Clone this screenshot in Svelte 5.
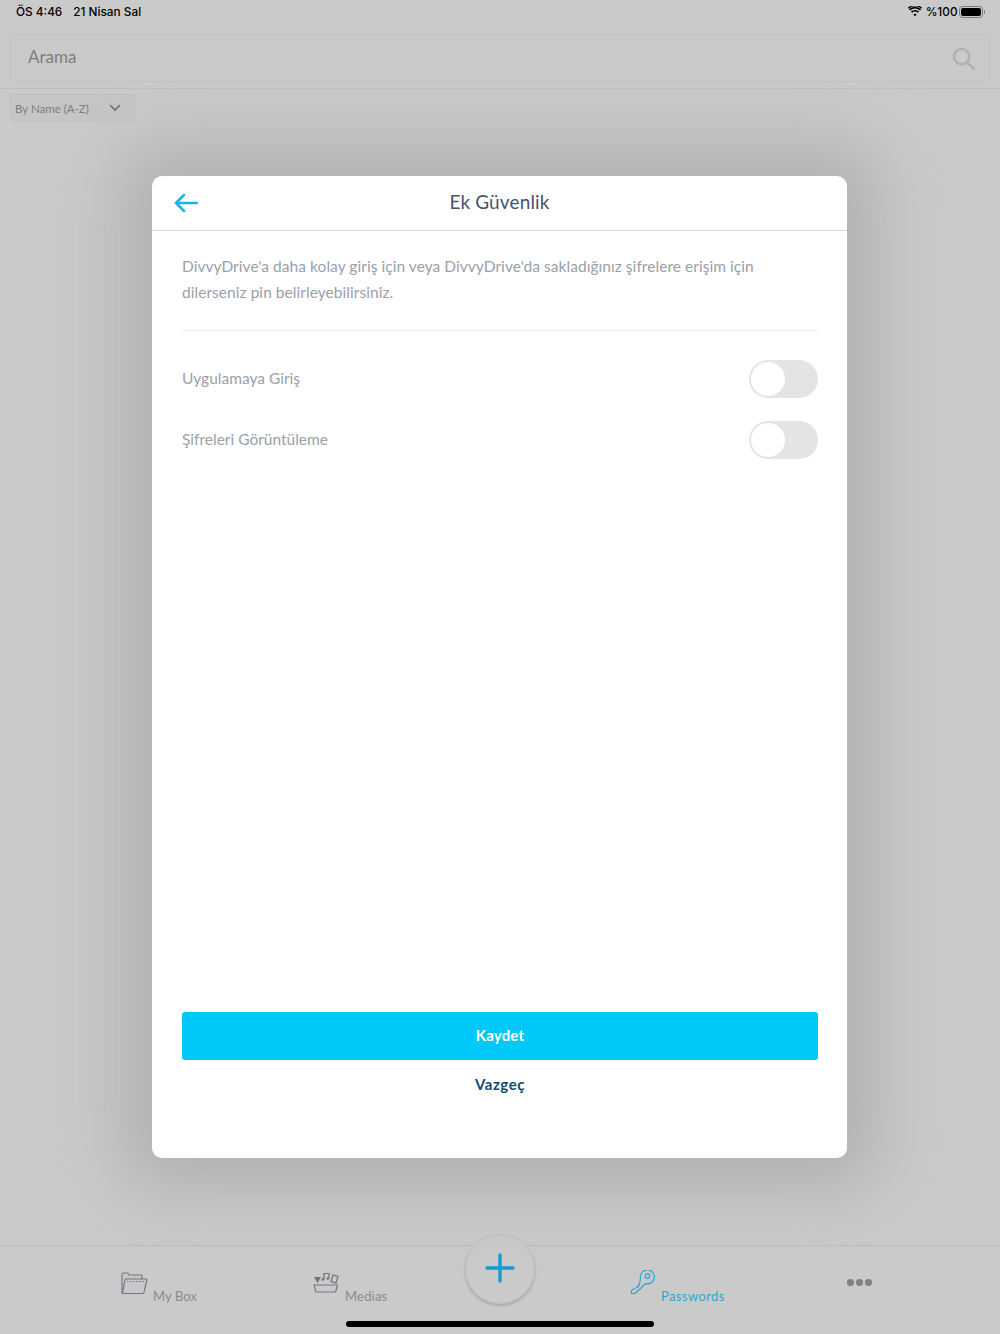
<script>
  const toggles = ['Uygulamaya Giriş', 'Şifreleri Görüntüleme'];
</script>

<div class="page">
  <div class="status">
    <div class="status-left"><span>ÖS 4:46</span><span>21 Nisan Sal</span></div>
    <div class="status-right">
      <svg class="wifi" width="14" height="11" viewBox="0 0 14 11"><path d="M7 7.800a1.700 1.700 0 0 1 1.500.8L7 10.400 5.500 8.600A1.700 1.700 0 0 1 7 7.800Z" fill="#000"/><path d="M3.500 6.200a5 5 0 0 1 7 0M1.500 3.900a7.800 7.800 0 0 1 11 0" fill="none" stroke="#000" stroke-width="1.700"/><path d="M.3 2.200a10 10 0 0 1 13.400 0" fill="none" stroke="#000" stroke-width="1.300"/></svg>
      <span>%100</span>
      <div class="battery"><div class="battery-fill"></div></div>
      <div class="battery-tip"></div>
    </div>
  </div>

  <div class="search-wrap">
    <div class="search">
      <span>Arama</span>
      <svg width="23" height="23" viewBox="0 0 24 24" fill="none" stroke="#b0b0b3" stroke-width="2.500"><circle cx="10" cy="10" r="8"/><path d="M16 16l7 7" stroke-linecap="round"/></svg>
    </div>
  </div>

  <div class="sort-row">
    <div class="sort">
      <span>By Name (A-Z)</span>
      <svg width="12" height="8" viewBox="0 0 12 8" fill="none" stroke="#6c7075" stroke-width="1.600"><path d="M1 1l5 5 5-5"/></svg>
    </div>
  </div>

  <div class="stage">
    <div class="modal">
      <header class="modal-head">
        <svg class="back" width="24" height="20" viewBox="0 0 24 20" fill="none" stroke="#19b5ea" stroke-width="2.500" stroke-linecap="round" stroke-linejoin="round"><path d="M23 10H2M10 2l-8 8 8 8"/></svg>
        <h1>Ek Güvenlik</h1>
      </header>
      <div class="modal-body">
        <p class="intro">DivvyDrive'a daha kolay giriş için veya DivvyDrive'da sakladığınız şifrelere erişim için dilerseniz pin belirleyebilirsiniz.</p>
        <div class="rule"></div>
        <div class="rows">
          {#each toggles as label}
            <div class="row">
              <span>{label}</span>
              <div class="switch"><div class="knob"></div></div>
            </div>
          {/each}
        </div>
        <div class="actions">
          <button class="save">Kaydet</button>
          <button class="cancel">Vazgeç</button>
        </div>
      </div>
    </div>
  </div>

  <nav class="tabbar">
    <div class="tab mybox">
      <svg width="28" height="23" viewBox="0 0 28 23" fill="#c7c7cc" stroke="#74787f" stroke-width="1.200" stroke-linejoin="round"><path d="M2 21V2.500Q2 1 3.500 1H7q1 0 1.500 1L9 3h12q1 0 1 1v3"/><path d="M2.500 21.500 5 8q.2-1 1.200-1H26q1 0 .8 1L24 20.500q-.2 1-1.200 1Z"/><path d="M7 9.500h17" stroke-dasharray="1.500 1.500" fill="none"/></svg>
      <span>My Box</span>
    </div>
    <div class="tab medias">
      <svg width="26" height="22" viewBox="0 0 26 22"><path d="M1 5h7L4.500 11Z" fill="#6d7178"/><path d="M11 7.500V1.500h5v5" fill="none" stroke="#6d7178" stroke-width="1.200"/><circle cx="9.800" cy="7.500" r="1.300" fill="#6d7178"/><circle cx="14.800" cy="6.500" r="1.300" fill="#6d7178"/><path d="M20 3l5 1.500-2 6.500-5-1.500Z" fill="none" stroke="#6d7178" stroke-width="1.200"/><path d="M1 13h23.500l-2 7H3Z" fill="#c9c9cc" stroke="#74787f" stroke-width="1.200"/></svg>
      <span>Medias</span>
    </div>
    <div class="plus">
      <svg width="30" height="30" viewBox="0 0 30 30" stroke="#149fcf" stroke-width="3.400" stroke-linecap="round"><path d="M15 2v26M2 15h26"/></svg>
    </div>
    <div class="tab passwords">
      <svg width="25" height="25" viewBox="0 0 25 25" fill="none" stroke="#2ca6d1" stroke-width="1.200" stroke-linejoin="round"><path d="M10.500 9.500a7 7 0 1 1 5 5.200L5 24.500H1.500v-3l2-1.500h1.500l1.200-1.500h1.500v-1.800h1.500Z" transform="translate(0 -1)"/><circle cx="17.500" cy="6" r="2.300"/></svg>
      <span>Passwords</span>
    </div>
    <div class="tab more"><i></i><i></i><i></i></div>
    <div class="home"></div>
  </nav>
</div>

<style>
  :global(body) { margin: 0; }
  .page {
    width: 1000px; height: 1334px; display: flex; flex-direction: column;
    background: #cacaca; font-family: "Lato", "Open Sans", sans-serif; overflow: hidden;
    position: relative;
  }
  .status {
    height: 24px; flex: none; display: flex; justify-content: space-between; align-items: center;
    padding: 0 15px 1px 16px; box-sizing: border-box; font-family: "Inter", sans-serif;
    font-size: 11.800px; font-weight: 500; color: #000;
  }
  .status-left { display: flex; gap: 11px; }
  .status-right { display: flex; align-items: center; }
  .wifi { margin-right: 4px; }
  .battery { width: 24px; height: 12px; border: 1px solid #7b7b7b; border-radius: 3.500px; padding: 1px; box-sizing: border-box; margin-left: 1px; }
  .battery-fill { width: 100%; height: 100%; background: #000; border-radius: 2px; }
  .battery-tip { width: 1.500px; height: 4px; background: #7b7b7b; margin-left: 1px; border-radius: 0 1px 1px 0; }
  .search-wrap { flex: none; padding: 10px 10px 6px; border-bottom: 1px solid #bfbfbf; }
  .search {
    height: 48px; box-sizing: border-box; border: 1px solid #c2c2c2; border-radius: 4px;
    display: flex; align-items: center; justify-content: space-between; padding: 0 14px 0 17px;
    font-size: 17px; color: #7d7d7d;
  }
  .search span { margin-bottom: 4px; }
  .sort-row { flex: none; padding: 5px 10px 0; }
  .sort {
    width: 125px; height: 28px; box-sizing: border-box; border: 1px solid #c2c2c2; border-radius: 4px;
    background: #c6c6c6; display: flex; align-items: center; justify-content: space-between;
    padding: 0 13px 0 4px; font-size: 11.500px; color: #808080;
  }
  .stage {
    flex: 1; position: relative; display: flex; justify-content: center; align-items: flex-start;
    padding-top: 54px; min-height: 0;
  }
  .modal {
    width: 695px; height: 982px; background: #fff; border-radius: 10px;
    box-shadow: 0 0 70px 30px rgba(160, 165, 160, .65);
    display: flex; flex-direction: column; position: relative; z-index: 1;
    margin-left: -1px;
  }
  .modal-head {
    height: 55px; flex: none; box-sizing: border-box; border-bottom: 1px solid #d8d8d8;
    display: flex; align-items: center; justify-content: center; position: relative;
  }
  .back { position: absolute; left: 22px; top: 17px; }
  h1 { margin: 0 0 4px 0; font-size: 19px; letter-spacing: .15px; font-weight: 400; color: #47536b; }
  .modal-body { flex: 1; display: flex; flex-direction: column; padding: 23px 29px 0 30px; }
  .intro { margin: 0; width: 600px; font-size: 15.500px; letter-spacing: .05px; line-height: 25.500px; color: #9a9fa9; }
  .rule { height: 1px; background: #ececec; margin-top: 25px; }
  .rows { display: flex; flex-direction: column; gap: 23px; margin-top: 29px; }
  .row { display: flex; align-items: center; justify-content: space-between; font-size: 15.500px; color: #9a9fa9; }
  .row span { margin-bottom: 3px; }
  .switch {
    width: 69px; height: 38px; border-radius: 19px; background: #e4e4e4; box-sizing: border-box; padding: 2px;
  }
  .knob { width: 34px; height: 34px; border-radius: 50%; background: #fff; }
  .actions { margin-top: auto; padding-bottom: 50px; display: flex; flex-direction: column; }
  .save {
    height: 48px; border: 0; border-radius: 3px; background: #00c8f8; color: #fff; padding-bottom: 4px;
    font: 700 15px "Lato", sans-serif; letter-spacing: .15px;
  }
  .cancel {
    height: 48px; border: 0; background: none; color: #0d4a70;
    font: 700 15px "Lato", sans-serif; letter-spacing: .5px;
  }
  .tabbar {
    height: 89px; flex: none; box-sizing: border-box; border-top: 1px solid #bdbdbd;
    position: relative; display: grid; grid-template-columns: 250px 215px 70px 126px 1fr; 
  }
  .tab { display: flex; align-items: flex-start; font-size: 13px; color: #8a8a8a; letter-spacing: .1px; }
  .mybox { padding: 26px 0 0 120px; }
  .mybox span { margin-top: 16px; margin-left: 5px; }
  .medias { padding: 26px 0 0 63px; }
  .medias span { margin-top: 16px; margin-left: 6px; letter-spacing: .2px; }
  .passwords { padding: 24px 0 0 95px; color: #2ca6d1; grid-column: 4; width: 200px; }
  .passwords span { margin-top: 18px; margin-left: 6px; letter-spacing: .4px; }
  .more { grid-column: 5; padding: 33px 0 0 186px; gap: 2.500px; }
  .more i { width: 6.500px; height: 6.500px; border-radius: 50%; background: #808080; }
  .plus {
    position: relative; top: -12px; width: 68px; height: 65px; padding-bottom: 3px; box-sizing: content-box;
    border-radius: 50%; background: #cacaca;
    border: 1px solid #c0c0c0; box-shadow: 0 2px 3px rgba(0,0,0,.16);
    display: flex; align-items: center; justify-content: center;
  }
  .home { position: absolute; left: 346px; top: 75px; width: 308px; height: 6px; border-radius: 3px; background: #000; }
</style>
